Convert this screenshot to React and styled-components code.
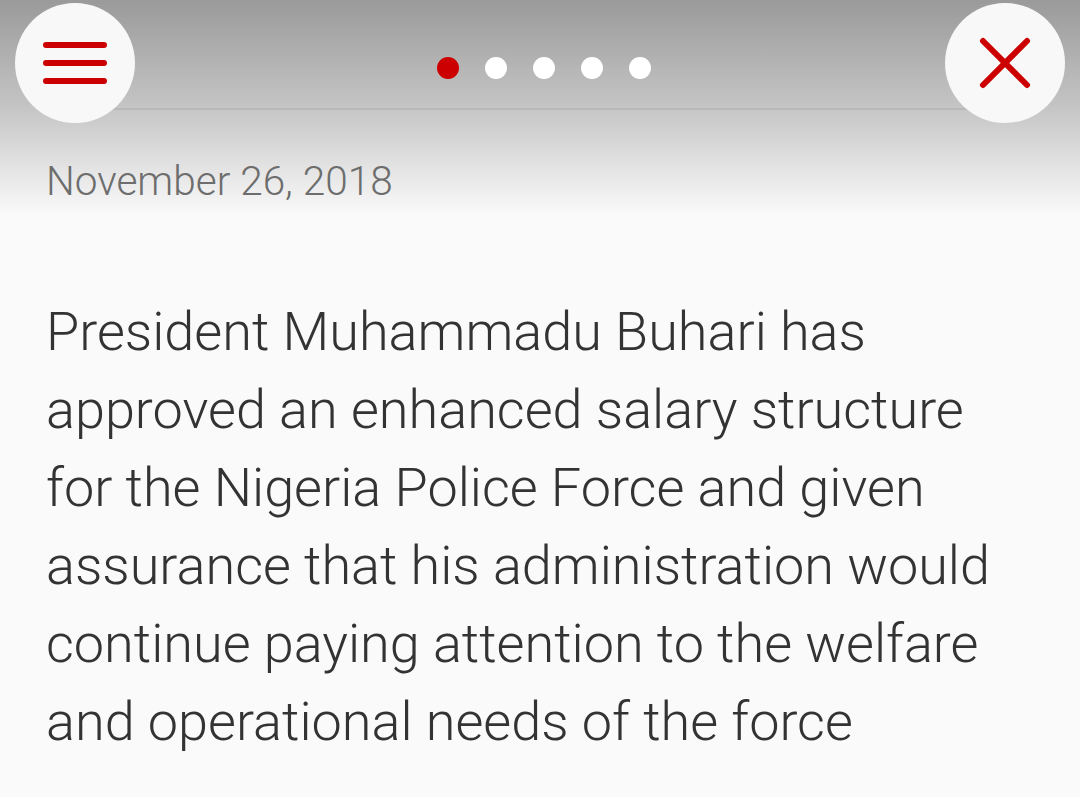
import styled, { createGlobalStyle } from "styled-components";

const GlobalStyle = createGlobalStyle`
  html, body {
    margin: 0;
    padding: 0;
    background: #fafafa;
    font-family: Roboto, "Noto Sans", sans-serif;
  }
`;

const paragraphs = [
  "President Muhammadu Buhari has approved an enhanced salary structure for the Nigeria Police Force and given assurance that his administration would continue paying attention to the welfare and operational needs of the force",
];

export default function App() {
  const slides = [0, 1, 2, 3, 4];
  const active = 0;

  return (
    <Page>
      <GlobalStyle />
      <Header>
        <Bar>
          <RoundButton aria-label="Menu">
            <svg width="64" height="44" viewBox="0 0 64 44">
              <g stroke="#cc0000" strokeWidth="6" strokeLinecap="round">
                <line x1="3" y1="4" x2="61" y2="4" />
                <line x1="3" y1="22" x2="61" y2="22" />
                <line x1="3" y1="40" x2="61" y2="40" />
              </g>
            </svg>
          </RoundButton>
          <Pager>
            {slides.map((i) => (
              <Dot key={i} $active={i === active} />
            ))}
          </Pager>
          <RoundButton aria-label="Close">
            <svg width="52" height="52" viewBox="0 0 52 52">
              <g stroke="#cc0000" strokeWidth="6" strokeLinecap="round">
                <line x1="4" y1="4" x2="48" y2="48" />
                <line x1="48" y1="4" x2="4" y2="48" />
              </g>
            </svg>
          </RoundButton>
        </Bar>
        <DateLine>November 26, 2018</DateLine>
      </Header>
      <Article>
        {paragraphs.map((p, i) => (
          <Paragraph key={i}>{p}</Paragraph>
        ))}
      </Article>
    </Page>
  );
}

const Page = styled.div`
  width: 1080px;
  min-height: 797px;
  background: #fafafa;
  overflow: hidden;
`;

const Header = styled.header`
  height: 215px;
  background: linear-gradient(
    to bottom,
    #9a9a9a 0px,
    #c4c4c4 105px,
    #e4e4e4 170px,
    #fafafa 215px
  );
`;

const Bar = styled.div`
  display: flex;
  align-items: flex-start;
  padding: 3px 15px 0;
`;

const RoundButton = styled.button`
  position: relative;
  z-index: 1;
  flex: none;
  width: 120px;
  height: 120px;
  border-radius: 50%;
  border: none;
  padding: 0;
  background: #f8f8f8;
  display: flex;
  align-items: center;
  justify-content: center;
  cursor: pointer;
`;

const Pager = styled.div`
  flex: 1;
  height: 107px;
  margin: 0 -25px;
  border-bottom: 2px solid #b9b9b9;
  display: flex;
  align-items: center;
  justify-content: center;
  gap: 26px;
  padding-top: 24px;
  padding-left: 8px;
  box-sizing: border-box;
`;

const Dot = styled.span`
  width: 22px;
  height: 22px;
  border-radius: 50%;
  background: ${(p) => (p.$active ? "#cc0000" : "#ffffff")};
`;

const DateLine = styled.div`
  margin: 34px 0 0 46px;
  font-size: 40.5px;
  font-weight: 300;
  color: #6d6d6d;
  line-height: 48px;
`;

const Article = styled.article`
  padding: 78px 46px 0;
`;

const Paragraph = styled.p`
  margin: 0;
  font-size: 54px;
  font-weight: 300;
  line-height: 78px;
  color: #333333;
`;
